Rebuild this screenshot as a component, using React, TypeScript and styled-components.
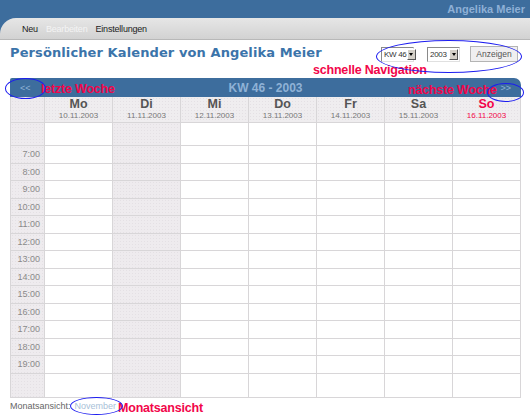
import React from 'react';
import styled, { createGlobalStyle, css } from 'styled-components';

const GlobalStyle = createGlobalStyle`
  html, body {
    margin: 0;
    padding: 0;
    background: #ffffff;
    font-family: "DejaVu Sans", Verdana, sans-serif;
  }
`;

const BLUE = '#3d6d9d';
const RED = '#f2064a';
const RING = '#1c1cf0';

const Page = styled.div`
  position: relative;
  width: 530px;
  height: 418px;
  overflow: hidden;
  background: #fff;
`;

const Header = styled.div`
  background: ${BLUE};
`;

const Brand = styled.div`
  height: 18px;
  display: flex;
  justify-content: flex-end;
  align-items: center;
  padding-right: 5px;
  color: #8eb0d6;
  font-family: "Liberation Sans", Arial, sans-serif;
  font-weight: bold;
  font-size: 11px;
`;

const MenuBar = styled.div`
  height: 21px;
  border-top-left-radius: 16px;
  background: linear-gradient(#e6e6e6, #d2d2d2);
  border-bottom: 1px solid #b8b8b8;
  display: flex;
  align-items: center;
  gap: 8px;
  padding-left: 22px;
`;

const MenuItem = styled.span<{ $disabled?: boolean }>`
  font-family: "Liberation Sans", Arial, sans-serif;
  font-size: 9px;
  letter-spacing: -0.2px;
  color: ${(p) => (p.$disabled ? '#f4f4f4' : '#222')};
`;

const TitleRow = styled.div`
  height: 38px;
  display: flex;
  align-items: flex-start;
  justify-content: space-between;
  padding: 5px 12px 0 10px;
  box-sizing: border-box;
`;

const Title = styled.h1`
  margin: 0;
  font-size: 13px;
  font-weight: bold;
  color: #3b74aa;
  letter-spacing: 0.1px;
`;

const Controls = styled.div`
  display: flex;
  align-items: center;
  gap: 13px;
  margin-top: 1px;
`;

const Select = styled.div<{ $w: number }>`
  width: ${(p) => p.$w}px;
  height: 13px;
  border: 1px solid #8a8a8a;
  border-right-color: #e0e0e0;
  border-bottom-color: #e0e0e0;
  background: #fff;
  display: flex;
  align-items: center;
  justify-content: space-between;
  white-space: nowrap;
  font-family: "Liberation Sans", Arial, sans-serif;
  font-size: 8px;
  letter-spacing: -0.3px;
  color: #333;
  padding-left: 2px;
  box-sizing: content-box;
`;

const Arrow = styled.span`
  flex: none;
  width: 9px;
  height: 11px;
  margin-right: 1px;
  background: #d4d0c8;
  border: 1px solid;
  border-color: #fff #555 #555 #fff;
  box-sizing: border-box;
  display: flex;
  align-items: center;
  justify-content: center;
  &::after {
    content: '';
    border-left: 2.5px solid transparent;
    border-right: 2.5px solid transparent;
    border-top: 3px solid #000;
  }
`;

const Button = styled.button`
  width: 48px;
  height: 16px;
  padding: 0;
  background: #f0eff0;
  border: 1px solid #b4b4b4;
  font-family: "Liberation Sans", Arial, sans-serif;
  font-size: 8.5px;
  color: #555;
  margin-left: -3px;
`;

const Calendar = styled.div`
  margin: 0 9px 0 10px;
`;

const CalBar = styled.div`
  height: 19px;
  background: ${BLUE};
  border-top-right-radius: 7px;
  border-top-left-radius: 2px;
  display: flex;
  align-items: center;
  justify-content: space-between;
  padding: 0 10px 0 10px;
  font-family: "Liberation Sans", Arial, sans-serif;
  font-weight: bold;
  color: #8fb2d6;
`;

const Nav = styled.span<{ $right?: boolean }>`
  font-size: 9px;
  font-weight: normal;
  color: #8fb2d6;
  width: 20px;
  text-align: ${(p) => (p.$right ? 'right' : 'left')};
`;

const Week = styled.span`
  font-size: 12px;
`;

const Grid = styled.div`
  display: grid;
  grid-template-columns: 33px repeat(7, 1fr);
  grid-template-rows: 25px 22px repeat(13, 16.5px) 23px;
  gap: 1px;
  background: #d8d6d8;
  border: 1px solid #d8d6d8;
  border-top: none;
`;

const shaded = css`
  background-color: #eeebee;
  background-image: radial-gradient(#e4e0e4 0.6px, transparent 0.7px);
  background-size: 3px 3px;
`;

const DayHead = styled.div<{ $sunday?: boolean }>`
  ${shaded};
  background-color: #efedef;
  display: flex;
  flex-direction: column;
  align-items: center;
  justify-content: center;
  font-family: "Liberation Sans", Arial, sans-serif;
  color: ${(p) => (p.$sunday ? RED : '#555')};
`;

const DayName = styled.span`
  font-weight: bold;
  font-size: 12.5px;
  line-height: 13px;
`;

const DayDate = styled.span<{ $sunday?: boolean }>`
  font-size: 8px;
  line-height: 10px;
  color: ${(p) => (p.$sunday ? RED : '#777')};
`;

const Corner = styled.div`
  ${shaded};
`;

const TimeCell = styled.div`
  ${shaded};
  display: flex;
  align-items: center;
  justify-content: flex-end;
  padding-right: 4px;
  font-family: "Liberation Sans", Arial, sans-serif;
  font-size: 9px;
  color: #8a8a8a;
`;

const Cell = styled.div<{ $shaded?: boolean }>`
  background: #fff;
  ${(p) => p.$shaded && shaded};
`;

const Footer = styled.div`
  padding: 3px 0 0 10px;
  font-family: "Liberation Sans", Arial, sans-serif;
  font-size: 9px;
  color: #666;
`;

const MonthLink = styled.span`
  color: #a8bfd8;
  margin-left: 4px;
`;

const Note = styled.span<{ $x: number; $y: number }>`
  position: absolute;
  left: ${(p) => p.$x}px;
  top: ${(p) => p.$y}px;
  font-family: "Liberation Sans", Arial, sans-serif;
  font-weight: bold;
  font-size: 12.5px;
  letter-spacing: -0.2px;
  color: ${RED};
  white-space: nowrap;
`;

const Ring = styled.div<{ $x: number; $y: number; $w: number; $h: number }>`
  position: absolute;
  left: ${(p) => p.$x}px;
  top: ${(p) => p.$y}px;
  width: ${(p) => p.$w}px;
  height: ${(p) => p.$h}px;
  border: 1.5px solid ${RING};
  border-radius: 50%;
  box-sizing: border-box;
`;

const days = [
  { name: 'Mo', date: '10.11.2003' },
  { name: 'Di', date: '11.11.2003' },
  { name: 'Mi', date: '12.11.2003' },
  { name: 'Do', date: '13.11.2003' },
  { name: 'Fr', date: '14.11.2003' },
  { name: 'Sa', date: '15.11.2003' },
  { name: 'So', date: '16.11.2003' },
];

const hours = ['', '7:00', '8:00', '9:00', '10:00', '11:00', '12:00', '13:00', '14:00', '15:00', '16:00', '17:00', '18:00', '19:00', ''];

export default function App() {
  return (
    <Page>
      <GlobalStyle />
      <Header>
        <Brand>Angelika Meier</Brand>
        <MenuBar>
          <MenuItem>Neu</MenuItem>
          <MenuItem $disabled>Bearbeiten</MenuItem>
          <MenuItem>Einstellungen</MenuItem>
        </MenuBar>
      </Header>

      <TitleRow>
        <Title>Persönlicher Kalender von Angelika Meier</Title>
        <Controls>
          <Select $w={29}>
            KW 46 <Arrow />
          </Select>
          <Select $w={29}>
            2003 <Arrow />
          </Select>
          <Button>Anzeigen</Button>
        </Controls>
      </TitleRow>

      <Calendar>
        <CalBar>
          <Nav>&lt;&lt;</Nav>
          <Week>KW 46 - 2003</Week>
          <Nav $right>&gt;&gt;</Nav>
        </CalBar>
        <Grid>
          <Corner />
          {days.map((d) => (
            <DayHead key={d.name} $sunday={d.name === 'So'}>
              <DayName>{d.name}</DayName>
              <DayDate $sunday={d.name === 'So'}>{d.date}</DayDate>
            </DayHead>
          ))}
          {hours.map((h, i) => (
            <React.Fragment key={i}>
              <TimeCell>{h}</TimeCell>
              {days.map((d) => (
                <Cell key={d.name} $shaded={d.name === 'Di'} />
              ))}
            </React.Fragment>
          ))}
        </Grid>
      </Calendar>

      <Footer>
        Monatsansicht:<MonthLink>November</MonthLink>
      </Footer>

      <Note $x={313} $y={63}>schnelle Navigation</Note>
      <Ring $x={376} $y={40} $w={146} $h={33} />
      <Note $x={41} $y={82}>letzte Woche</Note>
      <Ring $x={5} $y={78} $w={41} $h={21} />
      <Note $x={408} $y={83}>nächste Woche</Note>
      <Ring $x={487} $y={83} $w={37} $h={19} />
      <Note $x={118} $y={401}>Monatsansicht</Note>
      <Ring $x={70} $y={397} $w={53} $h={18} />
    </Page>
  );
}
